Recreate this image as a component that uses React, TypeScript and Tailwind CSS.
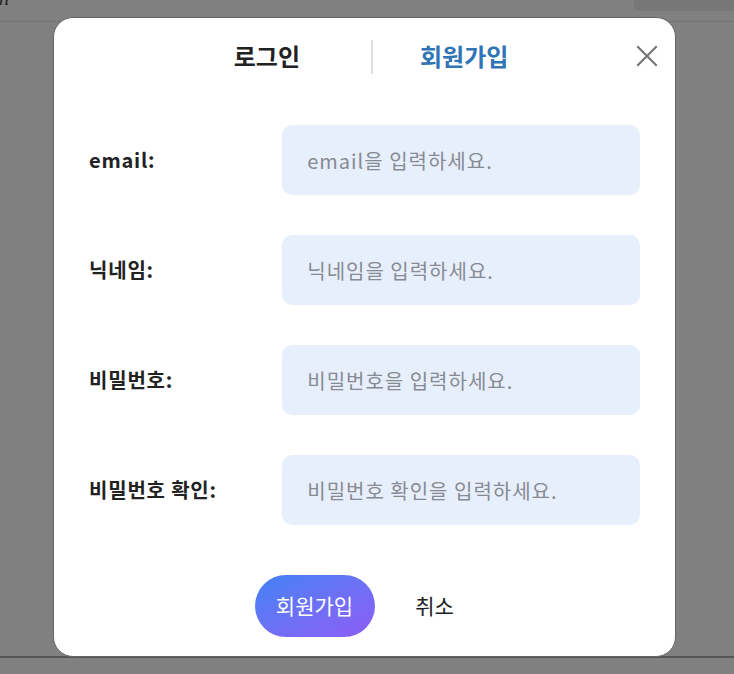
import React from "react";

const FONT = { fontFamily: '"Noto Sans CJK KR", "Noto Sans", sans-serif' };

const fields = [
  { label: "email:", placeholder: "email을 입력하세요." },
  { label: "닉네임:", placeholder: "닉네임을 입력하세요." },
  { label: "비밀번호:", placeholder: "비밀번호을 입력하세요." },
  { label: "비밀번호 확인:", placeholder: "비밀번호 확인을 입력하세요." },
];

function CloseIcon() {
  return (
    <svg width="22" height="22" viewBox="0 0 22 22" fill="none">
      <path d="M2 2L20 20M20 2L2 20" stroke="#777" strokeWidth="2.2" strokeLinecap="square" />
    </svg>
  );
}

export default function App() {
  return (
    <div className="relative h-[674px] w-full overflow-hidden bg-[#808080]" style={FONT}>
      {/* page behind the overlay */}
      <div className="flex h-[22px] items-start justify-between border-b border-[#747474]">
        <span
          className="-mt-[12px] ml-[-1px] text-[20px] italic leading-[20px] text-[#1e1e1e]"
          style={{ fontFamily: '"Liberation Serif", serif' }}
        >
          n
        </span>
        <div className="h-[11px] w-[100px] rounded-bl-[6px] bg-[#777]" />
      </div>
      <div className="absolute left-0 right-0 top-[656px] h-[18px] border-t-2 border-[#565656]" />

      {/* modal */}
      <div className="absolute left-[53px] top-[17px] flex h-[640px] w-[623px] flex-col rounded-[20px] border border-[#666] bg-white px-[35px]">
        <div className="relative flex h-[83px] items-start pt-[22px]">
          <div className="flex h-[34px] w-full">
            <button className="-mt-[3px] flex w-[282px] items-center justify-end pr-[71px] text-[24px] font-bold text-[#222]">
              로그인
            </button>
            <div className="h-[34px] w-[2px] bg-[#dde1e6]" />
            <button className="-mt-[3px] flex items-center pl-[47px] text-[24px] font-bold text-[#2f74b5]">
              회원가입
            </button>
          </div>
          <button className="absolute right-[-18px] top-[27px]">
            <CloseIcon />
          </button>
        </div>

        <div className="mt-[24px] flex flex-col gap-[40px]">
          {fields.map((f) => (
            <div key={f.label} className="flex h-[70px] items-center">
              <label className="w-[194px] text-[20px] font-bold tracking-[0.8px] text-[#222]">
                {f.label}
              </label>
              <input
                placeholder={f.placeholder}
                className="h-[70px] w-[359px] rounded-[10px] bg-[#e8effc] px-[25px] text-[20px] tracking-[1px] text-[#333] outline-none placeholder:text-[#858a93]"
              />
            </div>
          ))}
        </div>

        <div className="mt-[50px] flex justify-center gap-[20px]">
          <button className="h-[62px] w-[120px] rounded-full bg-gradient-to-br from-[#3b82f6] to-[#8b5cf6] text-[21px] text-white">
            회원가입
          </button>
          <button className="h-[62px] w-[80px] text-[21px] text-[#222]">취소</button>
        </div>
      </div>
    </div>
  );
}
